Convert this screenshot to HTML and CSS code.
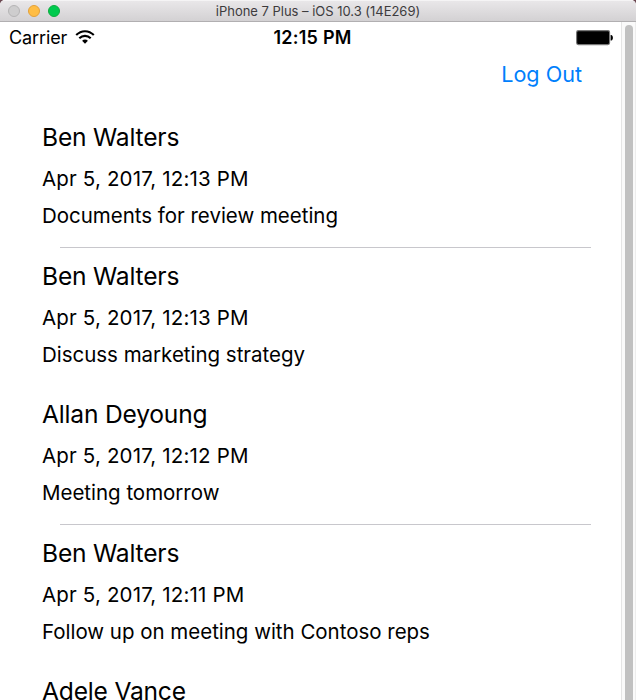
FILE: index.html
```html
<!DOCTYPE html>
<html lang="en">
<head>
<meta charset="utf-8">
<title>iPhone 7 Plus – iOS 10.3 (14E269)</title>
<link rel="stylesheet" href="styles.css">
</head>
<body>
<div class="window">
  <header class="titlebar">
    <div class="lights"><span class="light"></span><span class="light minimize"></span><span class="light maximize"></span></div>
    <span class="title">iPhone 7 Plus – iOS 10.3 (14E269)</span>
  </header>
  <div class="content">
    <main class="screen">
      <div class="status">
        <div class="carrier">
          <span>Carrier</span>
          <svg class="wifi" width="20" height="16" viewBox="0 0 20 16" fill="none" stroke="#000" stroke-width="2.1">
            <path d="M1.2 6.1C6.2.9 13.8.9 18.8 6.1"/>
            <path d="M4.3 9.3C7.6 6 12.4 6 15.7 9.3"/>
            <path d="M7.1 11.8C8.7 10.2 11.3 10.2 12.9 11.8L10 14.8Z" fill="#000" stroke="none"/>
          </svg>
        </div>
        <span class="clock">12:15 PM</span>
        <svg class="battery" width="38" height="16" viewBox="0 0 38 16">
          <rect x=".6" y=".6" width="33" height="14" rx="1.8" fill="#000" stroke="#777" stroke-width="1.1"/>
          <path d="M34.6 5h.8c2 .8 2 4.800 0 5.600h-.8z" fill="#000"/>
        </svg>
      </div>
      <nav class="nav"><a class="logout">Log Out</a></nav>
      <ul class="list">
        <li class="row ruled"><h2 class="name">Ben Walters</h2><p class="date">Apr 5, 2017, 12:13 PM</p><p class="subject">Documents for review meeting</p></li>
        <li class="row"><h2 class="name">Ben Walters</h2><p class="date">Apr 5, 2017, 12:13 PM</p><p class="subject">Discuss marketing strategy</p></li>
        <li class="row ruled"><h2 class="name">Allan Deyoung</h2><p class="date">Apr 5, 2017, 12:12 PM</p><p class="subject">Meeting tomorrow</p></li>
        <li class="row"><h2 class="name">Ben Walters</h2><p class="date">Apr 5, 2017, 12:11 PM</p><p class="subject">Follow up on meeting with Contoso reps</p></li>
        <li class="row"><h2 class="name">Adele Vance</h2></li>
      </ul>
    </main>
    <div class="scrollbar"><div class="thumb"></div></div>
  </div>
</div>
</body>
</html>
```
FILE: styles.css
```css
* { box-sizing: border-box; margin: 0; padding: 0; }
body {
  height: 700px;
  overflow: hidden;
  background: #6b4650;
  color: #000;
  font-family: Inter, "Liberation Sans", sans-serif;
}
.window {
  display: flex;
  flex-direction: column;
  height: 700px;
  overflow: hidden;
  background: #fff;
  border-radius: 5px 5px 0 0;
}
.titlebar {
  flex: none;
  display: grid;
  grid-template-columns: 1fr auto 1fr;
  align-items: center;
  height: 22px;
  padding: 0 8px;
  background: linear-gradient(#e9e7e9, #d3d1d3);
  border-top: 1px solid #f5f4f5;
  border-bottom: 1px solid #b1afb1;
}
.lights { display: flex; gap: 8px; }
.light {
  width: 12px;
  height: 12px;
  border-radius: 50%;
  background: #cecdce;
  border: 1px solid #b5b4b5;
}
.minimize { background: #ffbd44; border-color: #e2a03a; }
.maximize { background: #00ca4e; border-color: #0eab3f; }
.title { font-size: 13px; line-height: 20px; color: #3d3b3d; letter-spacing: -0.02px; white-space: nowrap; }
.content { flex: 1; display: flex; min-height: 0; }
.screen { flex: 1; overflow: hidden; }
.status {
  display: grid;
  grid-template-columns: 1fr auto 1fr;
  align-items: center;
  height: 32px;
  padding: 0 7px 0 9px;
}
.carrier { display: flex; align-items: center; gap: 8px; font-size: 18px; letter-spacing: -0.12px; }
.carrier span, .clock { margin-top: -2px; }
.wifi { margin-top: -3px; }
.clock { font-size: 18px; font-weight: 600; letter-spacing: 0.25px; padding-left: 2px; }
.battery { justify-self: end; }
.nav { display: flex; justify-content: flex-end; align-items: center; height: 42px; padding: 0 39px 2px 0; }
.logout { font-size: 21.6px; color: #007ffc; }
.list { list-style: none; padding: 13px 30px 0 42px; }
.row { height: 138.5px; padding-top: 12px; position: relative; white-space: nowrap; }
.ruled::after { content: ""; position: absolute; left: 18px; right: 0; bottom: 0; height: 1px; background: #c8c7cc; }
.name { font-size: 24.6px; font-weight: 400; line-height: 32px; letter-spacing: -0.2px; margin-bottom: 7px; }
.date { font-size: 20.5px; line-height: 38px; letter-spacing: 0.16px; }
.subject { font-size: 20.5px; line-height: 36px; letter-spacing: -0.02px; }
.scrollbar { width: 15px; background: #fafafa; border-left: 1px solid #e5e5e5; border-right: 1px solid #ededed; padding: 3px 2px 0 3px; }
.thumb { width: 8px; height: 690px; border-radius: 4px; background: #c1c1c1; }
```
